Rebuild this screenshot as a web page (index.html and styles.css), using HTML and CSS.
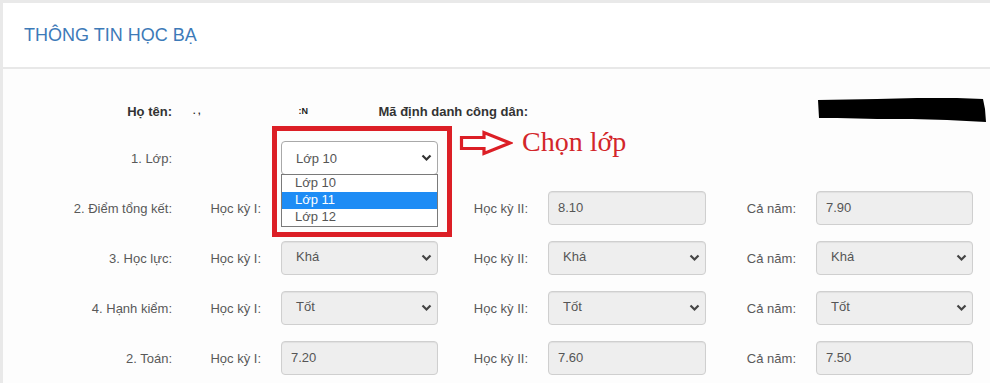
FILE: index.html
```html
<!DOCTYPE html>
<html lang="vi">
<head>
<meta charset="utf-8">
<title>Thông tin học bạ</title>
<link rel="stylesheet" href="styles.css">
</head>
<body>
<div class="panel">
  <div class="panel-heading">
    <h3 class="panel-title">THÔNG TIN HỌC BẠ</h3>
  </div>
  <div class="panel-body">
    <div class="form-grid info-row">
      <div class="lbl lbl-main strong">Họ tên:</div>
      <div class="name-val"><span class="mark">. ,</span><span class="mark">:N</span></div>
      <div class="lbl lbl-id strong">Mã định danh công dân:</div>
      <div class="id-val">
        <svg class="scribble" width="170" height="26" viewBox="0 0 170 26"><path d="M1 3 L60 2 L100 1 L140 1 L166 2 L168 12 L169 25 L130 23 L95 22 L60 22 L20 21 L2 21 Z" fill="#000"/></svg>
      </div>
    </div>

    <div class="form-grid rows">
      <!-- 1. Lớp -->
      <div class="lbl lbl-main">1. Lớp:</div>
      <div class="cell-empty"></div>
      <div class="ctl lop-cell">
        <div class="select select-open"><span>Lớp 10</span>
          <svg class="chev" width="11" height="8" viewBox="0 0 11 8"><path d="M1.5 1.5 L5.5 5.5 L9.5 1.5" fill="none" stroke="#333" stroke-width="2.2"/></svg>
        </div>
        <ul class="dropdown">
          <li>Lớp 10</li>
          <li class="active">Lớp 11</li>
          <li>Lớp 12</li>
        </ul>
        <div class="highlight-box"></div>
        <svg class="arrow" width="54" height="26" viewBox="0 0 54 26"><path d="M2.5 7.5 H25 V2.5 L51 13 L25 23.5 V18.5 H2.5 Z" fill="#fff" stroke="#dc1f26" stroke-width="3.2" stroke-linejoin="miter"/></svg>
        <div class="note">Chọn lớp</div>
      </div>
      <div class="row-rest"></div>

      <!-- 2. Điểm tổng kết -->
      <div class="lbl lbl-main">2. Điểm tổng kết:</div>
      <div class="lbl lbl-sub">Học kỳ I:</div>
      <div class="ctl"><div class="input"></div></div>
      <div class="lbl lbl-sub">Học kỳ II:</div>
      <div class="ctl"><div class="input">8.10</div></div>
      <div class="lbl lbl-sub">Cả năm:</div>
      <div class="ctl"><div class="input">7.90</div></div>

      <!-- 3. Học lực -->
      <div class="lbl lbl-main">3. Học lực:</div>
      <div class="lbl lbl-sub">Học kỳ I:</div>
      <div class="ctl"><div class="select"><span>Khá</span><svg class="chev" width="11" height="8" viewBox="0 0 11 8"><path d="M1.5 1.5 L5.5 5.5 L9.5 1.5" fill="none" stroke="#444" stroke-width="2.2"/></svg></div></div>
      <div class="lbl lbl-sub">Học kỳ II:</div>
      <div class="ctl"><div class="select"><span>Khá</span><svg class="chev" width="11" height="8" viewBox="0 0 11 8"><path d="M1.5 1.5 L5.5 5.5 L9.5 1.5" fill="none" stroke="#444" stroke-width="2.2"/></svg></div></div>
      <div class="lbl lbl-sub">Cả năm:</div>
      <div class="ctl"><div class="select"><span>Khá</span><svg class="chev" width="11" height="8" viewBox="0 0 11 8"><path d="M1.5 1.5 L5.5 5.5 L9.5 1.5" fill="none" stroke="#444" stroke-width="2.2"/></svg></div></div>

      <!-- 4. Hạnh kiểm -->
      <div class="lbl lbl-main">4. Hạnh kiểm:</div>
      <div class="lbl lbl-sub">Học kỳ I:</div>
      <div class="ctl"><div class="select"><span>Tốt</span><svg class="chev" width="11" height="8" viewBox="0 0 11 8"><path d="M1.5 1.5 L5.5 5.5 L9.5 1.5" fill="none" stroke="#444" stroke-width="2.2"/></svg></div></div>
      <div class="lbl lbl-sub">Học kỳ II:</div>
      <div class="ctl"><div class="select"><span>Tốt</span><svg class="chev" width="11" height="8" viewBox="0 0 11 8"><path d="M1.5 1.5 L5.5 5.5 L9.5 1.5" fill="none" stroke="#444" stroke-width="2.2"/></svg></div></div>
      <div class="lbl lbl-sub">Cả năm:</div>
      <div class="ctl"><div class="select"><span>Tốt</span><svg class="chev" width="11" height="8" viewBox="0 0 11 8"><path d="M1.5 1.5 L5.5 5.5 L9.5 1.5" fill="none" stroke="#444" stroke-width="2.2"/></svg></div></div>

      <!-- 2. Toán -->
      <div class="lbl lbl-main">2. Toán:</div>
      <div class="lbl lbl-sub">Học kỳ I:</div>
      <div class="ctl"><div class="input">7.20</div></div>
      <div class="lbl lbl-sub">Học kỳ II:</div>
      <div class="ctl"><div class="input">7.60</div></div>
      <div class="lbl lbl-sub">Cả năm:</div>
      <div class="ctl"><div class="input">7.50</div></div>
    </div>
  </div>
</div>
</body>
</html>
```

FILE: styles.css
```css
* { box-sizing: border-box; }

html, body {
  margin: 0;
  padding: 0;
}

body {
  background: #e9e9e9;
  font-family: "Liberation Sans", Arial, sans-serif;
  font-size: 13px;
  color: #595959;
  overflow: hidden;
  height: 383px;
}

.panel {
  margin: 3px 0 0 3px;
  background: #fdfdfd;
  height: 380px;
  overflow: hidden;
}

.panel-heading {
  height: 66px;
  background: #fff;
  border-bottom: 2px solid #e8e8e8;
  display: flex;
  align-items: center;
  padding-left: 21px;
}

.panel-title {
  margin: 0;
  font-size: 18px;
  font-weight: normal;
  color: #3d7ab8;
  letter-spacing: 0;
}

.panel-body {
  padding: 25px 0 0 17px;
}

.form-grid {
  display: grid;
  grid-template-columns: 152px 109px 157px 110px 158px 110px 157px;
  align-items: center;
}

.info-row {
  height: 34px;
  margin-bottom: 13px;
}

.rows {
  grid-auto-rows: 34px;
  row-gap: 16px;
}

.lbl {
  text-align: right;
  white-space: nowrap;
}

.lbl-main { padding-right: 0; }
.lbl-sub { padding-right: 20px; }

.strong {
  font-weight: bold;
  color: #333;
}

.name-val {
  grid-column: 2 / 3;
  padding-left: 21px;
  display: flex;
  gap: 98px;
  white-space: nowrap;
}

.mark {
  font-size: 9px;
  font-weight: bold;
  color: #222;
}

.lbl-id {
  grid-column: 3 / 5;
  padding-right: 20px;
}

.id-val {
  grid-column: 7 / 8;
  height: 34px;
  position: relative;
}

.scribble {
  display: block;
  margin: 3px 0 0 1px;
}

.row-rest { grid-column: 4 / 8; }

.ctl {
  height: 34px;
}

.input, .select {
  height: 34px;
  border: 1px solid #cfcfcf;
  border-radius: 4px;
  background: #eeeeee;
  box-shadow: inset 0 1px 1px rgba(0, 0, 0, 0.06);
  color: #555;
  font-size: 13px;
  display: flex;
  align-items: center;
}

.input {
  padding: 0 0 2px 9px;
}

.select {
  padding: 0 5px 3px 14px;
  justify-content: space-between;
}

.select .chev {
  margin-top: 3px;
}

.select-open {
  background: #fff;
  border-color: #a9a9a9;
  box-shadow: none;
  padding-bottom: 0;
}

.select-open .chev { margin-top: 0; }

.lop-cell {
  position: relative;
}

.dropdown {
  position: absolute;
  z-index: 3;
  left: 0;
  top: 33px;
  width: 157px;
  margin: 0;
  padding: 0;
  list-style: none;
  background: #fff;
  border: 1px solid #7a7a7a;
}

.dropdown li {
  height: 17px;
  line-height: 16px;
  padding-left: 13px;
  color: #555;
  font-size: 13px;
}

.dropdown li.active {
  background: #1e8cf5;
  color: #fff;
}

.highlight-box {
  position: absolute;
  z-index: 4;
  left: -9px;
  top: -15px;
  width: 180px;
  height: 111px;
  border: 5px solid #dc1f26;
}

.arrow {
  position: absolute;
  z-index: 4;
  left: 178px;
  top: -11px;
}

.note {
  position: absolute;
  z-index: 4;
  left: 241px;
  top: -13px;
  font-family: "Liberation Serif", "Times New Roman", serif;
  font-size: 28px;
  line-height: 28px;
  color: #d3262a;
  white-space: nowrap;
}
```
